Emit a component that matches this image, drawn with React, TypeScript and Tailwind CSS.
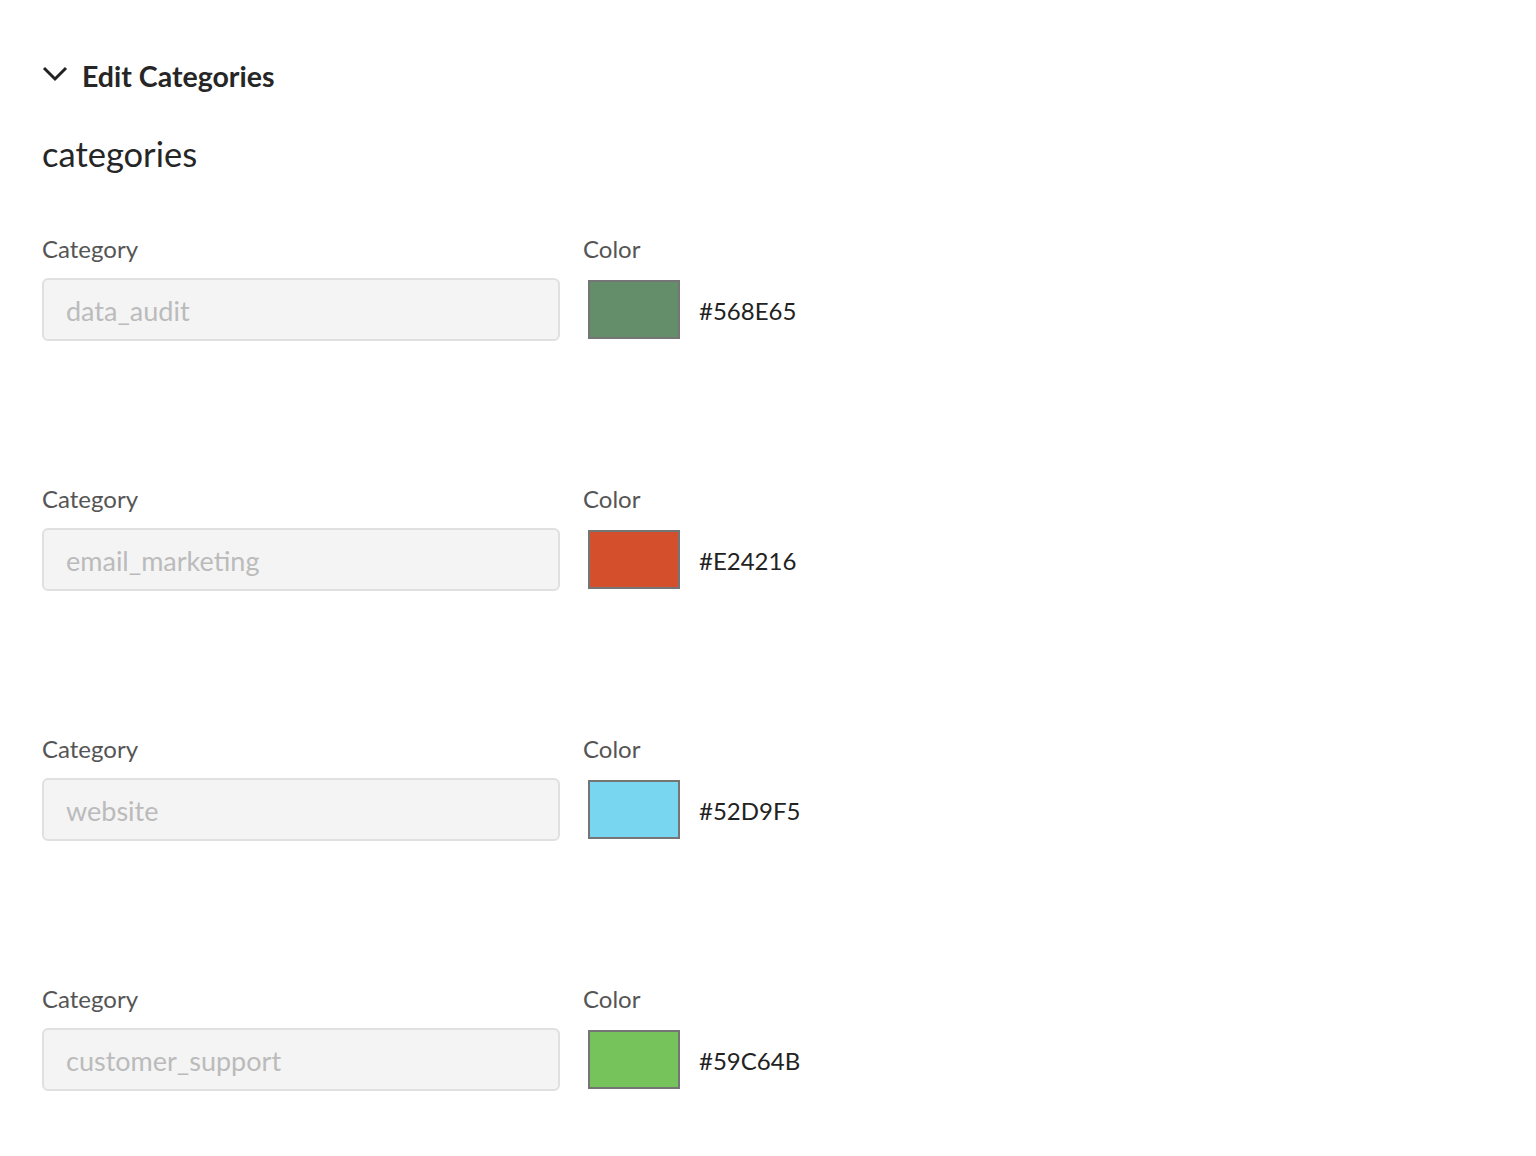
import React from 'react';

const rows = [
  { name: 'data_audit', hex: '#568E65', swatch: 'bg-[#638E69]' },
  { name: 'email_marketing', hex: '#E24216', swatch: 'bg-[#D4502C]' },
  { name: 'website', hex: '#52D9F5', swatch: 'bg-[#79D6F0]' },
  { name: 'customer_support', hex: '#59C64B', swatch: 'bg-[#76C35C]' },
];

function CategoryRow({ name, hex, swatch }: { name: string; hex: string; swatch: string }) {
  return (
    <div className="flex h-[250px] shrink-0 items-start">
      <div className="w-[518px]">
        <div className="text-[24px] leading-[30px] text-[#555]">Category</div>
        <div className="mt-[14px] flex h-[63px] items-center rounded-md border-2 border-[#e0e0e0] bg-[#f4f4f4] pl-[22px] pt-[3px] text-[27px] text-[#bbbbbb]">
          {name}
        </div>
      </div>
      <div className="ml-[23px]">
        <div className="text-[24px] leading-[30px] text-[#555]">Color</div>
        <div className="mt-[16px] flex items-center">
          <div className={`ml-[5px] h-[59px] w-[92px] border-2 border-[#757575] ${swatch}`} />
          <span className="ml-[19px] pt-[2px] text-[24px] text-[#222]">{hex}</span>
        </div>
      </div>
    </div>
  );
}

export default function App() {
  return (
    <div className="flex h-[1156px] flex-col overflow-hidden bg-white px-[42px] pt-[58px] font-['Lato','Noto_Sans',sans-serif]">
      <div className="flex items-center">
        <svg width="26" height="18" viewBox="0 0 26 18" className="mt-[-4px]">
          <path d="M2 3 L13 14 L24 3" fill="none" stroke="#222" strokeWidth="3" />
        </svg>
        <h2 className="ml-[14px] text-[28.5px] font-bold leading-[36px] text-[#262626]">Edit Categories</h2>
      </div>
      <div className="mt-[40px] text-[34.5px] leading-[40px] text-[#262626]">categories</div>
      <div className="mt-[60px] flex flex-col">
        {rows.map((r) => (
          <CategoryRow key={r.name} {...r} />
        ))}
      </div>
    </div>
  );
}
